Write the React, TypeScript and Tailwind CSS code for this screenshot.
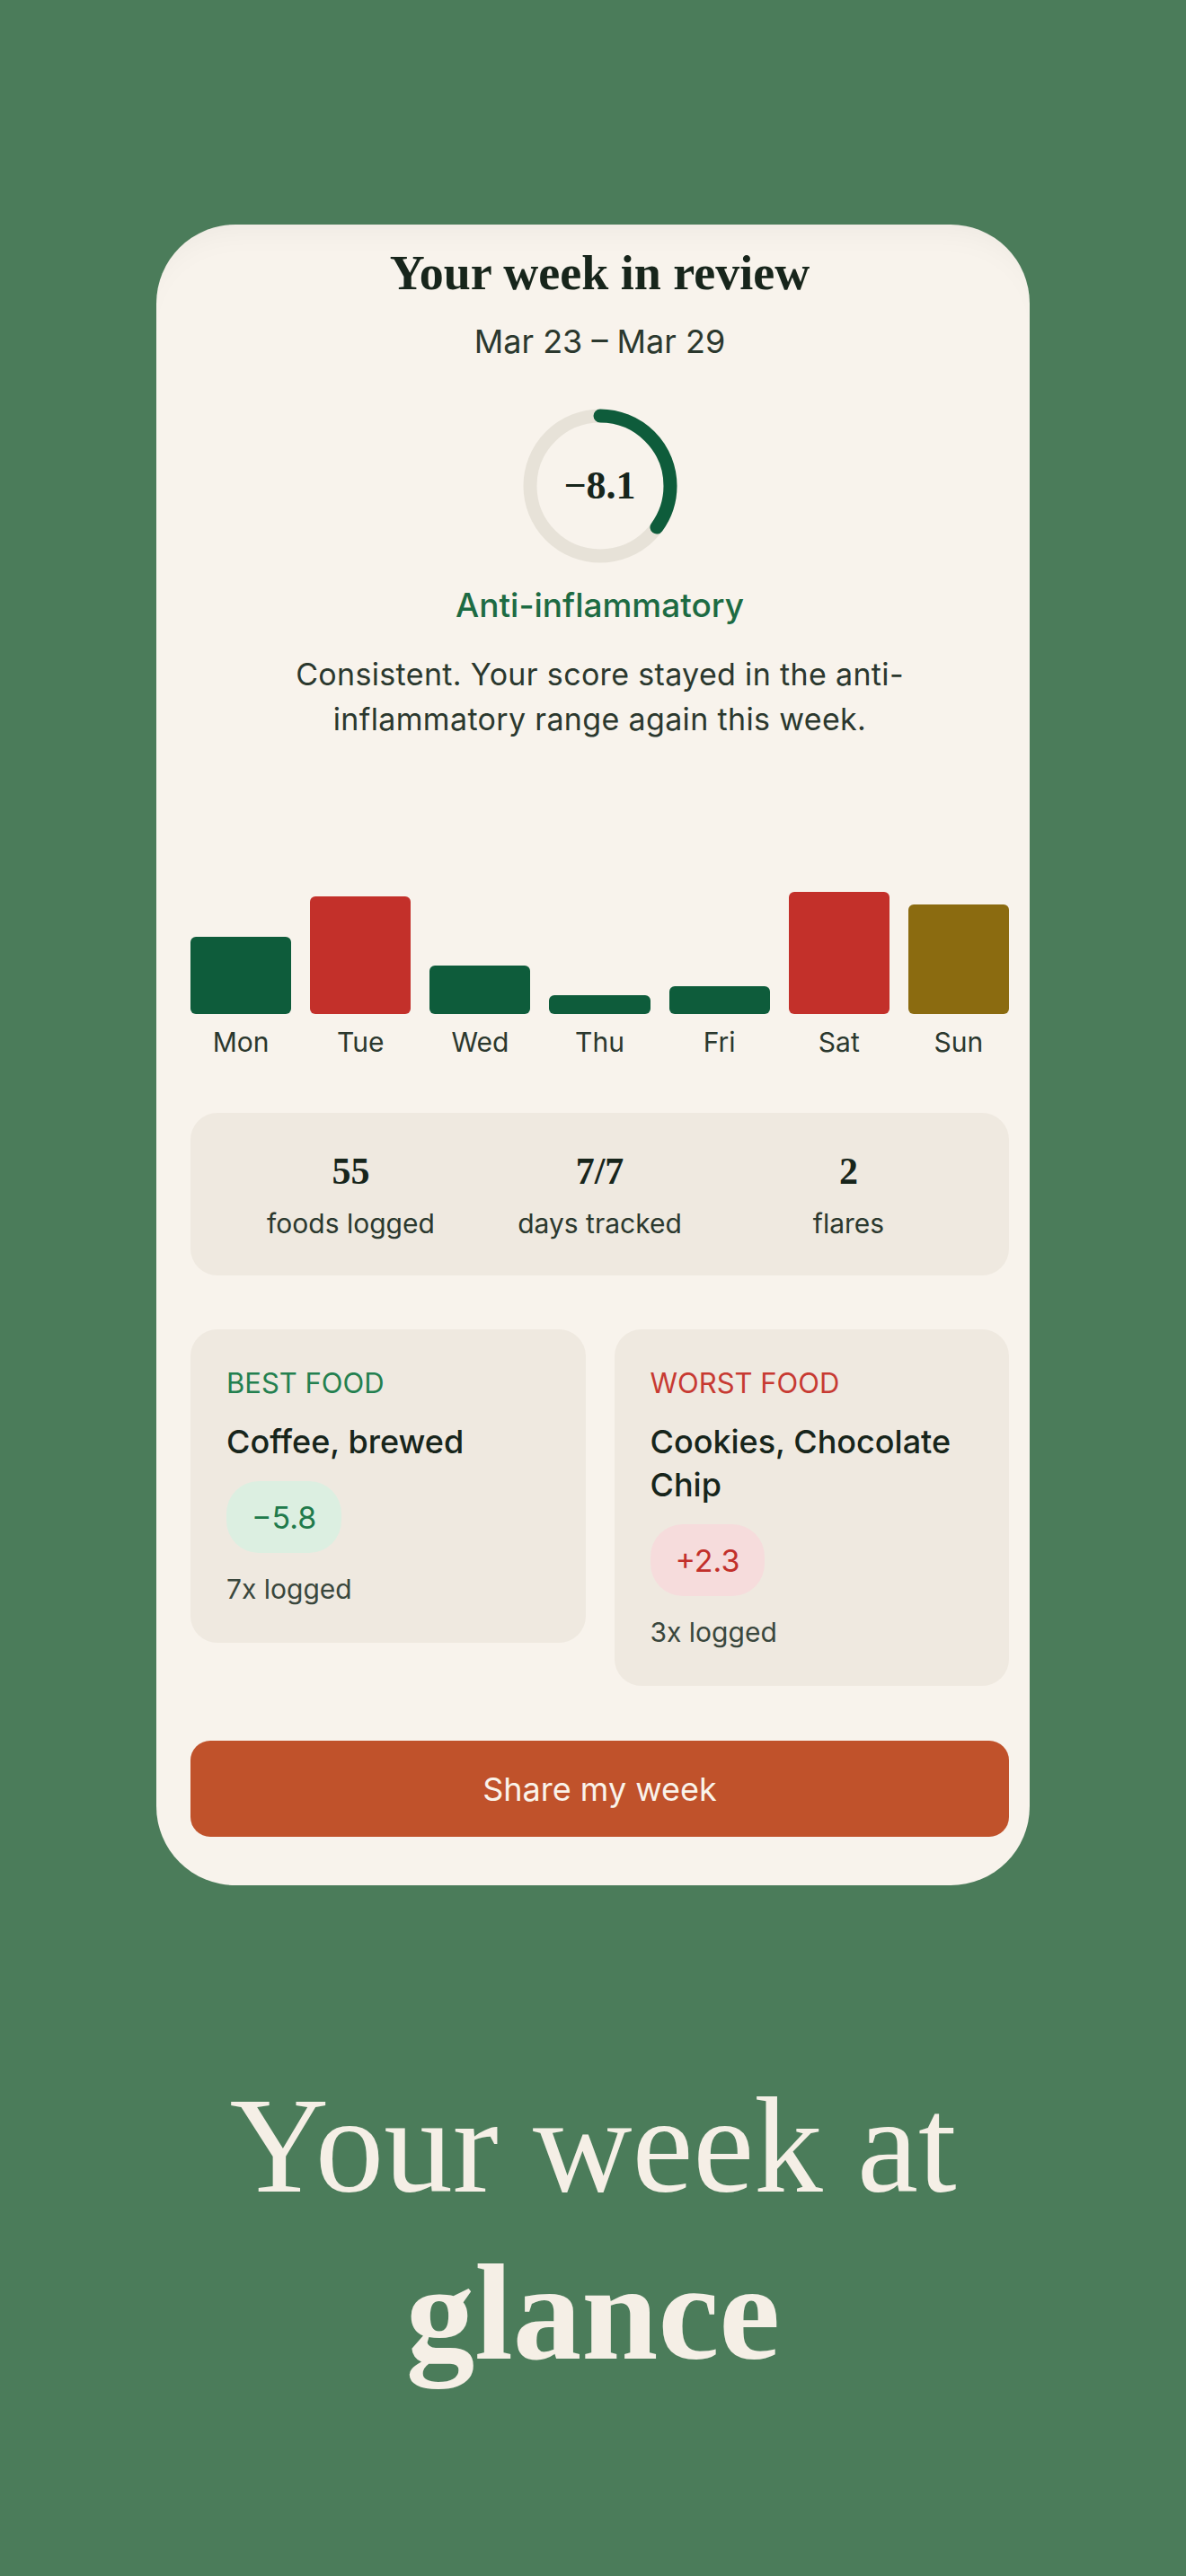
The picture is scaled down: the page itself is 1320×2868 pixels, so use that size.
import React from 'react';

const serif = "font-['Liberation_Serif','DejaVu_Serif',serif]";
const sans = "font-['Inter','Noto_Sans',sans-serif]";

const bars = [
    { day: 'Mon', h: 86, color: 'bg-[#0e5c3b]' },
    { day: 'Tue', h: 131, color: 'bg-[#c3302a]' },
    { day: 'Wed', h: 54, color: 'bg-[#0e5c3b]' },
    { day: 'Thu', h: 21, color: 'bg-[#0e5c3b]' },
    { day: 'Fri', h: 31, color: 'bg-[#0e5c3b]' },
    { day: 'Sat', h: 136, color: 'bg-[#c3302a]' },
    { day: 'Sun', h: 122, color: 'bg-[#8b6b10]' },
];

const stats = [
    { value: '55', label: 'foods logged' },
    { value: '7/7', label: 'days tracked' },
    { value: '2', label: 'flares' },
];

function ScoreRing() {
    const r = 78;
    const c = 2 * Math.PI * r;
    const pct = 0.35;
    return (
        <div className="relative w-[172px] h-[172px]">
            <svg width="172" height="172" viewBox="0 0 172 172" className="-rotate-90">
                <circle cx="86" cy="86" r={r} fill="none" stroke="#e7e2d8" strokeWidth="15" />
                <circle
                    cx="86"
                    cy="86"
                    r={r}
                    fill="none"
                    stroke="#0e5c3b"
                    strokeWidth="15"
                    strokeLinecap="round"
                    strokeDasharray={`${c * pct} ${c}`}
                />
            </svg>
            <div className={`absolute inset-0 flex items-center justify-center ${serif} font-bold text-[44px] text-[#17251b]`}>
                −8.1
            </div>
        </div>
    );
}

function FoodCard({ kind, name, score, logged, good }: { kind: string; name: string; score: string; logged: string; good: boolean }) {
    return (
        <div className="bg-[#efe9e0] rounded-[30px] px-10 pt-10 pb-10">
            <div className={`text-[31px] leading-[40px] ${good ? 'text-[#23804f]' : 'text-[#c73a32]'}`}>{kind}</div>
            <div className="mt-[21px] text-[36px] leading-[48px] font-medium text-[#17251b]">{name}</div>
            <div
                className={`mt-5 inline-flex h-[80px] items-center rounded-[36px] px-7 text-[34px] ${
                    good ? 'bg-[#dcefe1] text-[#207a4b]' : 'bg-[#f6dcdc] text-[#c2302b]'
                }`}
            >
                {score}
            </div>
            <div className="mt-5 text-[30px] leading-[40px] text-[#3a473d]">{logged}</div>
        </div>
    );
}

export default function App() {
    return (
        <main className={`min-h-[2868px] w-full bg-[#4b7c5a] flex flex-col items-center ${sans}`}>
            <div className="mt-[250px] w-[972px] rounded-[88px] bg-[#f8f3ec] pl-[38px] pr-[23px] pt-[23px] pb-[54px] shadow-[inset_0_30px_40px_-30px_rgba(0,0,0,0.06)]">
                <div className="flex flex-col items-center">
                    <h1 className={`${serif} font-bold text-[54px] leading-[62px] text-[#17251b]`}>Your week in review</h1>
                    <div className="mt-[23px] text-[36px] leading-[44px] text-[#2b382e]">Mar 23 – Mar 29</div>
                    <div className="mt-[53px]">
                        <ScoreRing />
                    </div>
                    <div className="mt-[27px] text-[37px] leading-[40px] font-medium text-[#1d6b43]">Anti-inflammatory</div>
                    <p className="mt-8 text-[34px] leading-[50px] tracking-[0.01em] text-[#2b382e] text-center w-[800px]">
                        Consistent. Your score stayed in the anti-
                        <br />
                        inflammatory range again this week.
                    </p>
                </div>

                <div className="mt-[163px] grid grid-cols-7 gap-[21px]">
                    {bars.map((b) => (
                        <div key={b.day} className="flex flex-col items-stretch">
                            <div className="h-[140px] flex items-end">
                                <div className={`w-full rounded-[6px] ${b.color}`} style={{ height: b.h }} />
                            </div>
                            <div className="mt-[13px] text-center text-[30px] leading-[36px] text-[#2b382e]">{b.day}</div>
                        </div>
                    ))}
                </div>

                <div className="mt-[61px] bg-[#efe9e0] rounded-[30px] px-10 pt-[41px] pb-[38px] grid grid-cols-3">
                    {stats.map((s) => (
                        <div key={s.label} className="flex flex-col items-center">
                            <div className={`${serif} font-bold text-[42px] leading-[48px] text-[#17251b]`}>{s.value}</div>
                            <div className="mt-[14px] text-[30px] leading-[40px] text-[#2b382e]">{s.label}</div>
                        </div>
                    ))}
                </div>

                <div className="mt-[60px] grid grid-cols-2 gap-8 items-start">
                    <FoodCard kind="BEST FOOD" name="Coffee, brewed" score="−5.8" logged="7x logged" good />
                    <FoodCard kind="WORST FOOD" name="Cookies, Chocolate Chip" score="+2.3" logged="3x logged" good={false} />
                </div>

                <button className="mt-[61px] w-full h-[107px] rounded-[22px] bg-[#c0522b] text-[36px] text-[#faf3ea]">
                    Share my week
                </button>
            </div>

            <div className={`mt-[197px] ${serif} text-center text-[153px] leading-[186px] text-[#f5efe6]`}>
                <div>Your week at</div>
                <div className="font-bold">glance</div>
            </div>
        </main>
    );
}
